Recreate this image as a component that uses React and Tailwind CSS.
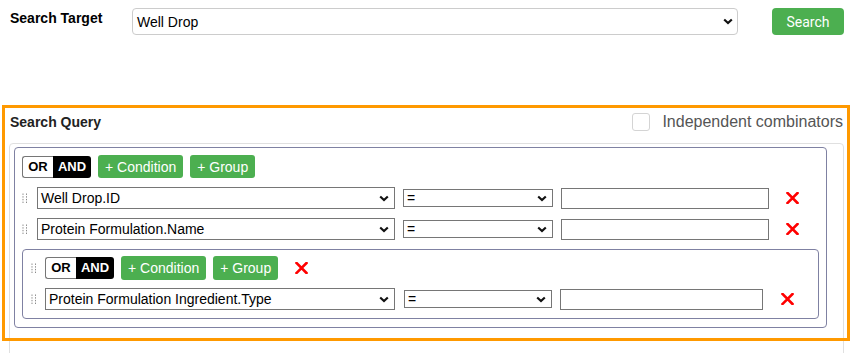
import React from 'react';

const font = { fontFamily: '"Liberation Sans", Arial, sans-serif' };

const Chevron = ({ className = '' }) => (
    <svg width="10" height="7" viewBox="0 0 10 7" className={className}>
        <polyline points="1.2,1.5 5,5 8.8,1.5" fill="none" stroke="#111" strokeWidth="2.2" />
    </svg>
);

const Handle = () => (
    <svg width="6" height="11" viewBox="0 0 6 11">
        {[0.5, 3.2, 5.9, 8.6].map((y) => (
            <g key={y} fill="#8a8a8a">
                <rect x="0.5" y={y} width="1" height="1.4" />
                <rect x="4" y={y} width="1" height="1.4" />
            </g>
        ))}
    </svg>
);

const RemoveX = () => (
    <svg width="13" height="12" viewBox="0 0 13 12" className="shrink-0">
        <path d="M1.5 1 L11.5 11 M11.5 1 L1.5 11" stroke="#ff0000" strokeWidth="2.6" strokeLinecap="square" />
    </svg>
);

const FieldSelect = ({ value, className }) => (
    <div className={`flex items-center justify-between border border-[#767676] bg-white pl-[3px] pr-[5px] text-[14px] text-black shrink-0 ${className}`}>
        <span className="leading-4 whitespace-nowrap">{value}</span>
        <Chevron />
    </div>
);

const Combinator = () => (
    <div className="flex h-[22px] text-[13px] font-bold leading-4">
        <div className="flex w-[31px] items-center justify-center rounded-l-[3px] border border-r-0 border-[#767676] bg-white text-black">OR</div>
        <div className="flex w-[38px] items-center justify-center rounded-r-[3px] bg-black text-white">AND</div>
    </div>
);

const GreenButton = ({ children, h }) => (
    <button className={`rounded-[3px] bg-[#4caf50] px-[7px] text-[14px] leading-4 text-white ${h}`}>{children}</button>
);

const Rule = ({ field, fieldW, opW, valW, gaps, handleW }) => (
    <div className="flex h-[22px] items-center">
        <div className={`flex shrink-0 items-center ${handleW}`}>
            <Handle />
        </div>
        <FieldSelect value={field} className={`h-[22px] ${fieldW}`} />
        <FieldSelect value="=" className={`h-[18px] ${opW} ${gaps[0]}`} />
        <div className={`h-[21px] shrink-0 border border-[#767676] bg-white ${valW} ${gaps[1]}`}></div>
        <div className={gaps[2]}>
            <RemoveX />
        </div>
    </div>
);

export default function App() {
    return (
        <div className="relative h-[353px] w-[852px] overflow-hidden bg-white text-black" style={font}>
            {/* search target */}
            <div className="flex items-start pl-[10px] pt-[8px]">
                <div className="w-[122px] pt-[2px] text-[14px] font-bold leading-4">Search Target</div>
                <div className="flex h-[27px] w-[606px] items-center justify-between rounded-[4px] border border-[#cccccc] bg-white pl-[4px] pr-[4px] text-[14px]">
                    <span className="leading-4">Well Drop</span>
                    <Chevron />
                </div>
                <button
                    className="ml-[34px] h-[27px] w-[72px] rounded-[4px] bg-[#4caf50] text-[14px] leading-4 text-white"
                    style={{ fontFamily: 'Roboto, "Liberation Sans", sans-serif' }}
                >
                    Search
                </button>
            </div>

            {/* search query box */}
            <div className="ml-[2px] mt-[70px] h-[236px] w-[848px] pt-[7px] outline-3 outline-[#ff9900] -outline-offset-3">
                <div className="flex h-[20px] items-center justify-between pl-[8px] pr-[7px]">
                    <div className="text-[14px] font-bold leading-4 text-[#222]">Search Query</div>
                    <div className="flex items-center">
                        <div className="h-[18px] w-[18px] rounded-[3px] border border-[#d4d4d4] bg-white"></div>
                        <span className="ml-[12px] text-[16px] leading-[18px] text-[#555]">Independent combinators</span>
                    </div>
                </div>

                <div className="ml-[7px] mr-[6px] mt-[11px] h-[230px] rounded-t-[4px] border border-[#e0e0e0] px-[4px] pt-[3px]">
                    {/* root group */}
                    <div className="flex w-[813px] flex-col gap-[9px] rounded-[4px] border border-[#7f81a2] pb-[8px] pl-[7px] pr-[7px] pt-[7px]">
                        <div className="flex h-[23px] items-center gap-[7px]">
                            <Combinator />
                            <GreenButton h="h-[23px]">+ Condition</GreenButton>
                            <GreenButton h="h-[23px]">+ Group</GreenButton>
                        </div>
                        <Rule
                            field="Well Drop.ID"
                            handleW="w-[15px]"
                            fieldW="w-[358px]"
                            opW="w-[150px]"
                            valW="w-[208px]"
                            gaps={['ml-[8px]', 'ml-[8px]', 'ml-[17px]']}
                        />
                        <Rule
                            field="Protein Formulation.Name"
                            handleW="w-[15px]"
                            fieldW="w-[358px]"
                            opW="w-[150px]"
                            valW="w-[208px]"
                            gaps={['ml-[8px]', 'ml-[8px]', 'ml-[17px]']}
                        />

                        {/* nested group */}
                        <div className="flex flex-col gap-[8px] rounded-[4px] border border-[#7f81a2] pb-[8px] pl-[8px] pr-[8px] pt-[6px]">
                            <div className="flex h-[24px] items-center">
                                <div className="flex w-[14px] items-center">
                                    <Handle />
                                </div>
                                <Combinator />
                                <div className="ml-[7px] flex gap-[7px]">
                                    <GreenButton h="h-[24px]">+ Condition</GreenButton>
                                    <GreenButton h="h-[24px]">+ Group</GreenButton>
                                </div>
                                <div className="ml-[17px]">
                                    <RemoveX />
                                </div>
                            </div>
                            <Rule
                                field="Protein Formulation Ingredient.Type"
                                handleW="w-[14px]"
                                fieldW="w-[350px]"
                                opW="w-[148px]"
                                valW="w-[203px]"
                                gaps={['ml-[9px]', 'ml-[8px]', 'ml-[18px]']}
                            />
                        </div>
                    </div>
                </div>
            </div>
        </div>
    );
}
